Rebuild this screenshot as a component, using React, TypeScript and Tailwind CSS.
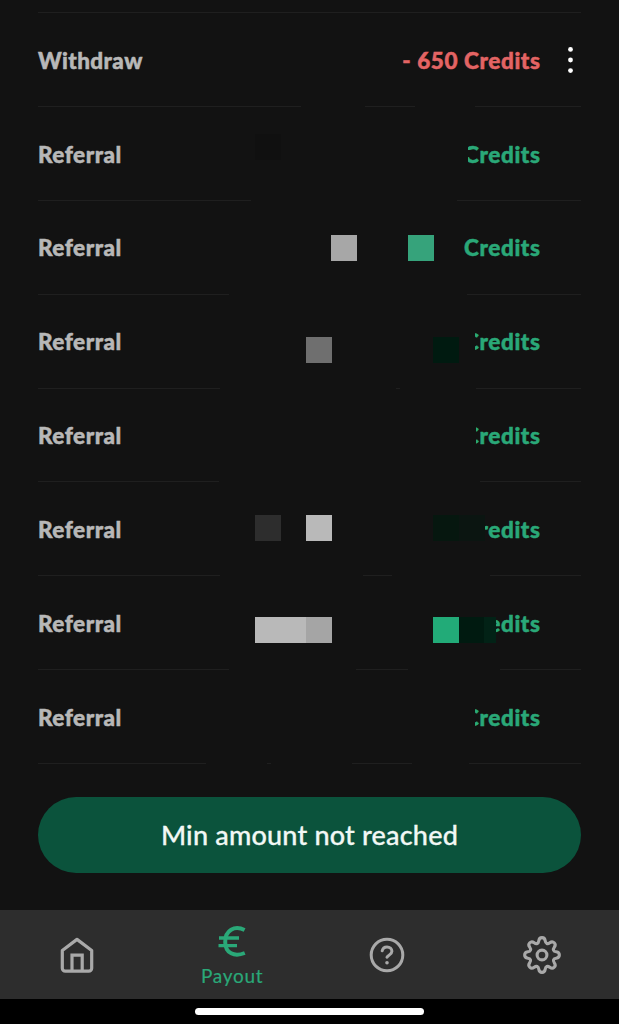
import React from 'react';

interface Block {
    x: number;
    y: number;
    w: number;
    h: number;
    color: string;
}

interface Transaction {
    label: string;
    amount: string;
    negative?: boolean;
    hasMenu?: boolean;
    // [start, end] ranges hidden in the divider
    gaps: [number, number][];
    blocks?: Block[];
}

const BG = '#121212';

// Coordinates are relative to the row
const transactions: Transaction[] = [
    { label: 'Withdraw', amount: '- 650 Credits', negative: true, hasMenu: true, gaps: [[263, 327], [377, 437]] },
    {
        label: 'Referral', amount: 'Credits', gaps: [[213, 419]],
        blocks: [
            { x: 217, y: 27, w: 26, h: 26, color: '#101010' },
            { x: 415, y: 30, w: 15, h: 36, color: BG },
            { x: 430, y: 43, w: 3, h: 7, color: BG },
        ],
    },
    {
        label: 'Referral', amount: 'Credits', gaps: [[191, 429]],
        blocks: [
            { x: 293, y: 34, w: 26, h: 26, color: '#a7a7a7' },
            { x: 370, y: 34, w: 26, h: 26, color: '#36a37b' },
        ],
    },
    {
        label: 'Referral', amount: 'Credits', gaps: [[182, 358], [362, 438]],
        blocks: [
            { x: 268, y: 42, w: 26, h: 26, color: '#6f6f6f' },
            { x: 395, y: 42, w: 26, h: 26, color: '#001a10' },
            { x: 421, y: 25, w: 16, h: 44, color: BG },
        ],
    },
    {
        label: 'Referral', amount: 'Credits', gaps: [[181, 442]],
        blocks: [{ x: 421, y: 25, w: 17, h: 44, color: BG }],
    },
    {
        label: 'Referral', amount: 'Credits', gaps: [[182, 325], [354, 452]],
        blocks: [
            { x: 217, y: 33, w: 26, h: 26, color: '#2d2d2d' },
            { x: 268, y: 33, w: 26, h: 26, color: '#b9b9b9' },
            { x: 421, y: 25, w: 26, h: 44, color: BG },
            { x: 447, y: 49, w: 3, h: 10, color: BG },
            { x: 395, y: 33, w: 26, h: 26, color: '#06170f' },
            { x: 421, y: 33, w: 26, h: 26, color: '#0b1511' },
        ],
    },
    {
        label: 'Referral', amount: 'Credits', gaps: [[191, 318], [370, 462]],
        blocks: [
            { x: 217, y: 41, w: 51, h: 26, color: '#b9b9b9' },
            { x: 268, y: 41, w: 26, h: 26, color: '#a5a5a5' },
            { x: 421, y: 25, w: 36, h: 44, color: BG },
            { x: 395, y: 41, w: 26, h: 26, color: '#22ab78' },
            { x: 421, y: 41, w: 25, h: 26, color: '#001a10' },
            { x: 446, y: 41, w: 12, h: 26, color: '#022216' },
        ],
    },
    {
        label: 'Referral', amount: 'Credits', gaps: [[168, 229], [233, 314], [374, 431]],
        blocks: [{ x: 421, y: 25, w: 16, h: 44, color: BG }],
    },
];

const TransactionRow: React.FC<{ item: Transaction }> = ({ item }) => (
    <li className="relative flex h-[93.9px] items-center border-b border-[#1f1f1f]">
        <span className={`pt-[2.4px] text-[22.5px] leading-7 font-black text-[#b8b8b8] [-webkit-text-stroke:0.5px] ${item.negative ? 'tracking-[0.4px]' : 'tracking-[0.5px]'}`}>
            {item.label}
        </span>
        <span className={`ml-auto pt-[2.4px] text-[22.5px] leading-7 font-black tracking-[0.6px] [-webkit-text-stroke:0.5px] ${item.negative ? 'text-[#e36464]' : 'text-[#2aa878]'}`}>
            {item.amount}
        </span>
        <span className="flex w-[40.5px] justify-end pt-0.5 pr-2">
            {item.hasMenu && (
                <svg width="5" height="28" viewBox="0 0 5 28" fill="white">
                    <circle cx="2.5" cy="3.4" r="2.4" />
                    <circle cx="2.5" cy="14" r="2.4" />
                    <circle cx="2.5" cy="24.6" r="2.4" />
                </svg>
            )}
        </span>
        {item.gaps.map(([start, end]) => (
            <i key={start} className="absolute -bottom-px h-px bg-[#121212]" style={{ left: start, width: end - start }} />
        ))}
        {item.blocks?.map((b, idx) => (
            <i key={idx} className="absolute" style={{ left: b.x, top: b.y, width: b.w, height: b.h, background: b.color }} />
        ))}
    </li>
);

const HomeIcon = () => (
    <svg width="36" height="38" viewBox="0 0 36 38" fill="none" stroke="currentColor" strokeWidth="3.2" strokeLinejoin="round">
        <path d="M3.3 14.5 18 3.4l14.7 11.1v17.7a3 3 0 0 1-3 3H6.3a3 3 0 0 1-3-3Z" />
        <path d="M13 35V19.2h10.2V35" strokeLinejoin="miter" />
    </svg>
);

const EuroIcon = () => (
    <svg width="28" height="32" viewBox="0 0 28 32" fill="none" stroke="currentColor" strokeWidth="4">
        <path d="M26.6 4C16.5-1 7.2 4.5 7.2 16S16.5 31 26.8 27" />
        <path d="M1 12h20M.5 19.6h18.5" strokeWidth="3.4" />
    </svg>
);

const HelpIcon = () => (
    <svg width="36" height="36" viewBox="0 0 36 36" fill="none" stroke="currentColor" strokeWidth="3" strokeLinecap="round" strokeLinejoin="round">
        <circle cx="18" cy="18" r="15.8" />
        <path d="M13.2 13.8c.5-2.6 2.3-3.9 4.8-3.9 2.8 0 4.9 1.8 4.9 4.3 0 3.2-3.6 3.8-4.9 6" />
        <circle cx="18" cy="25.8" r="1.8" fill="currentColor" stroke="none" />
    </svg>
);

// Eight round teeth, one every 45 degrees
const GearIcon = () => (
    <svg width="40" height="40" viewBox="-20 -20 40 40" fill="none" stroke="currentColor" strokeWidth="3.1" strokeLinejoin="round">
        <path d="M-3.2-14.2C-2.6-18.4 2.6-18.4 3.2-14.2 3.6-11.3 5.5-10.6 7.8-12.3 11.1-14.8 14.8-11.1 12.3-7.8 10.6-5.5 11.3-3.6 14.2-3.2 18.4-2.6 18.4 2.6 14.2 3.2 11.3 3.6 10.6 5.5 12.3 7.8 14.8 11.1 11.1 14.8 7.8 12.3 5.5 10.6 3.6 11.3 3.2 14.2 2.6 18.4-2.6 18.4-3.2 14.2-3.6 11.3-5.5 10.6-7.8 12.3-11.1 14.8-14.8 11.1-12.3 7.8-10.6 5.5-11.3 3.6-14.2 3.2-18.4 2.6-18.4-2.6-14.2-3.2-11.3-3.6-10.6-5.5-12.3-7.8-14.8-11.1-11.1-14.8-7.8-12.3-5.5-10.6-3.6-11.3-3.2-14.2Z" />
        <circle r="4.9" />
    </svg>
);

export default function App() {
    return (
        <div className="flex h-[1024px] w-[619px] flex-col overflow-hidden bg-[#121212] font-['Lato',sans-serif]">
            <main className="flex-1 px-[38px] pt-3">
                <ul className="border-t border-[#1f1f1f]">
                    {transactions.map((item, idx) => (
                        <TransactionRow key={idx} item={item} />
                    ))}
                </ul>
                <button className="mt-[33px] flex h-[76px] w-full items-center justify-center rounded-full bg-[#0b533c] pt-px text-[27px] font-medium tracking-[0.2px] text-[#f2f8f5] [-webkit-text-stroke:0.3px]">
                    Min amount not reached
                </button>
            </main>

            <nav className="grid h-[89px] grid-cols-4 items-center justify-items-center bg-[#2d2d2d] text-[#a9a9a9]">
                <a><HomeIcon /></a>
                <a className="flex flex-col items-center pt-1 text-[#2aa878]">
                    <EuroIcon />
                    <span className="mt-1.5 text-[19px] leading-6 tracking-[0.7px] [-webkit-text-stroke:0.2px]">Payout</span>
                </a>
                <a><HelpIcon /></a>
                <a><GearIcon /></a>
            </nav>
            <div className="flex h-[25px] justify-center bg-black pt-[9px]">
                <div className="h-[6.5px] w-[229px] rounded-full bg-white" />
            </div>
        </div>
    );
}
